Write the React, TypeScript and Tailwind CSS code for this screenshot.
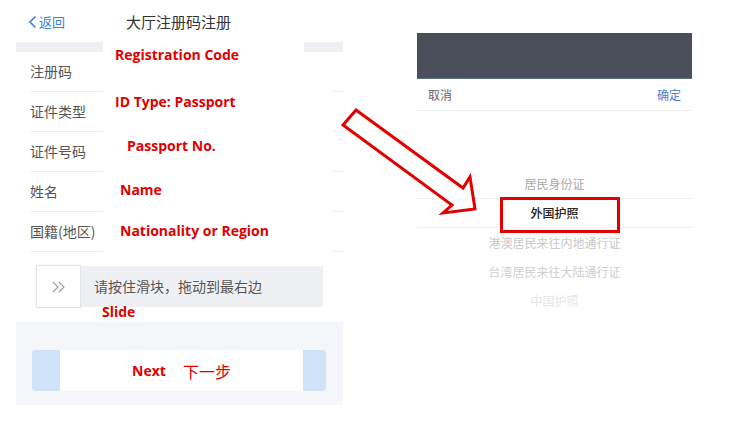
import React from "react";

const cjk = { fontFamily: '"Noto Sans CJK SC", "Noto Sans", sans-serif' };
const lat = { fontFamily: '"Open Sans", "Liberation Sans", "Noto Sans CJK SC", sans-serif' };

function Row({ label }: { label: string }) {
  return (
    <div className="ml-[14px] h-[40px] flex items-center border-b border-[#ececec] text-[14px] text-[#555]">
      {label}
    </div>
  );
}

export default function App() {
  return (
    <div className="relative w-[735px] h-[426px] bg-white overflow-hidden" style={cjk}>
      <div className="flex">
        {/* Left phone screenshot */}
        <div className="relative ml-[16px] w-[327px]">
          <div className="h-[42px] flex items-center pt-[2px]">
            <div className="flex items-center pl-[12px] text-[13px] text-[#3f7fe0]">
              <svg width="10" height="14" viewBox="0 0 10 14" className="mr-[1px]">
                <path d="M7.5 1.5 L2 7 L7.5 12.5" fill="none" stroke="#3f7fe0" strokeWidth="1.6" />
              </svg>
              <span>返回</span>
            </div>
            <div className="ml-[61px] text-[15px] text-[#333]">大厅注册码注册</div>
          </div>
          <div className="h-[10px] bg-[#eef0f4]" />
          <Row label="注册码" />
          <Row label="证件类型" />
          <Row label="证件号码" />
          <Row label="姓名" />
          <Row label="国籍(地区)" />
          <div className="mt-[13px] ml-[20px] w-[287px] h-[43px] flex items-center">
            <div className="w-[45px] h-[43px] bg-white border border-[#e4e4e8] shadow-[0_0_2px_rgba(0,0,0,0.08)] flex items-center justify-center text-[#999]">
              <svg width="16" height="14" viewBox="0 0 16 14">
                <path d="M2 2 L7 7 L2 12 M8 2 L13 7 L8 12" fill="none" stroke="#9a9a9a" strokeWidth="1.1" />
              </svg>
            </div>
            <div className="flex-1 h-[41px] bg-[#eff0f4] flex items-center pl-[13px] text-[14px] text-[#555]">
              请按住滑块，拖动到最右边
            </div>
          </div>
          <div className="mt-[14px] h-[83px] bg-[#f4f6f9] pt-[28px]">
            <div className="ml-[16px] w-[294px] h-[41px] rounded-[4px] bg-[#cfe4f9] flex">
              <div className="ml-[28px] w-[243px] h-[41px] bg-white flex items-center justify-center text-[#e00000] font-bold text-[14px]">
                <span style={lat}>Next</span>
                <span className="ml-[17px] font-normal text-[16px]" style={cjk}>下一步</span>
              </div>
            </div>
          </div>

          {/* White annotation overlay */}
          <div className="absolute left-[87px] top-[42px] w-[201px] h-[10px] bg-white" />
          <div className="absolute left-[87px] top-[52px] w-[230px] h-[204px] bg-white" />
          <div className="absolute left-[87px] top-[42px] w-[230px] h-[214px] text-[#e00000] font-bold text-[14px] leading-none" style={lat}>
            <div className="absolute left-[12px] top-[6px]">Registration Code</div>
            <div className="absolute left-[12px] top-[53px]">ID Type: Passport</div>
            <div className="absolute left-[24px] top-[97px]">Passport No.</div>
            <div className="absolute left-[17px] top-[141px]">Name</div>
            <div className="absolute left-[17px] top-[182px]">Nationality or Region</div>
          </div>
          <div className="absolute left-[86px] top-[305px] text-[#e00000] font-bold text-[14px] leading-none" style={lat}>Slide</div>
        </div>

        {/* Right phone screenshot */}
        <div className="ml-[74px] mt-[33px] w-[275px]">
          <div className="h-[46px] bg-[#4a4f59] border-b border-[#5d6f80]" />
          <div className="h-[32px] flex items-center justify-between px-[11px] border-b border-[#eeeeee] text-[12px]">
            <span className="text-[#666]">取消</span>
            <span className="text-[#4a80d8]">确定</span>
          </div>
          <div className="pt-[59px] text-[12px] text-center">
            <div className="h-[29px] flex items-center justify-center text-[#a8a8a8] border-b border-[#f0f0f0]">居民身份证</div>
            <div className="h-[29px] flex items-center justify-center text-[#222] font-medium border-b border-[#f0f0f0]">外国护照</div>
            <div className="h-[29px] flex items-center justify-center text-[#c8c8c8]">港澳居民来往内地通行证</div>
            <div className="h-[29px] flex items-center justify-center text-[#cfcfcf]">台湾居民来往大陆通行证</div>
            <div className="h-[29px] flex items-center justify-center text-[#e6e6e6]">中国护照</div>
          </div>
        </div>
      </div>

      {/* Red arrow */}
      <svg className="absolute left-[340px] top-[105px]" width="145" height="115" viewBox="0 0 145 115">
        <polygon
          points="16,5 123,83 130,72 135,104 103,108 112,100 3,20"
          fill="white"
          stroke="#e30000"
          strokeWidth="3"
          strokeLinejoin="miter"
        />
      </svg>
      {/* Red highlight box */}
      <div className="absolute left-[500px] top-[197px] w-[120px] h-[36px] border-[3px] border-[#e30000]" />
    </div>
  );
}
